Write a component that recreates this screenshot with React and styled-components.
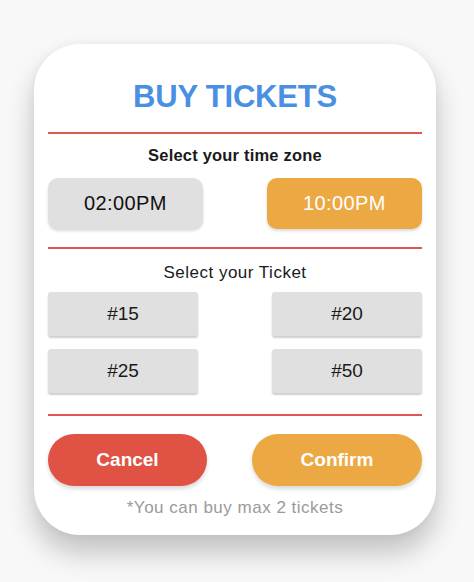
import styled, { createGlobalStyle } from 'styled-components';

const GlobalStyle = createGlobalStyle`
  html, body {
    margin: 0;
    padding: 0;
    background: #f8f8f8;
    font-family: 'Liberation Sans', Arial, sans-serif;
  }
`;

const times = [
  { label: '02:00PM', active: false },
  { label: '10:00PM', active: true },
];

const tickets = ['#15', '#20', '#25', '#50'];

function App() {
  return (
    <>
      <GlobalStyle />
      <Page>
        <Card>
          <Title>BUY TICKETS</Title>
          <Divider />
          <Label $bold>Select your time zone</Label>
          <TimeRow>
            {times.map((t) => (
              <TimeButton key={t.label} $active={t.active}>
                {t.label}
              </TimeButton>
            ))}
          </TimeRow>
          <Divider $gap={18} />
          <Label $gap={14}>Select your Ticket</Label>
          <TicketGrid>
            {tickets.map((t) => (
              <TicketButton key={t}>{t}</TicketButton>
            ))}
          </TicketGrid>
          <Divider $gap={21} />
          <Actions>
            <PillButton $color="#e05243" $width={159}>
              Cancel
            </PillButton>
            <PillButton $color="#eca943" $width={170}>
              Confirm
            </PillButton>
          </Actions>
          <Note>*You can buy max 2 tickets</Note>
        </Card>
      </Page>
    </>
  );
}

export default App;

const Page = styled.div`
  width: 474px;
  height: 582px;
  padding: 44px 0 0 34px;
  box-sizing: border-box;
  overflow: hidden;
`;

const Card = styled.div`
  width: 402px;
  height: 491px;
  box-sizing: border-box;
  padding: 0 14px;
  background: #ffffff;
  border-radius: 46px;
  box-shadow: 0 18px 28px rgba(0, 0, 0, 0.22), 0 0 10px rgba(0, 0, 0, 0.05);
  display: flex;
  flex-direction: column;
`;

const Title = styled.h1`
  margin: 33px 0 0;
  height: 40px;
  line-height: 40px;
  text-align: center;
  font-size: 31px;
  font-weight: 700;
  color: #4a90e2;
  letter-spacing: -0.2px;
`;

const Divider = styled.div`
  margin-top: ${({ $gap }) => $gap ?? 15}px;
  height: 2px;
  background: #e0574f;
`;

const Label = styled.div`
  margin-top: ${({ $gap }) => $gap ?? 11}px;
  height: 20px;
  line-height: 20px;
  text-align: center;
  font-size: ${({ $bold }) => ($bold ? 16.5 : 17)}px;
  letter-spacing: ${({ $bold }) => ($bold ? 0.2 : 0.5)}px;
  font-weight: ${({ $bold }) => ($bold ? 700 : 400)};
  color: #1a1a1a;
`;

const TimeRow = styled.div`
  margin-top: 13px;
  display: flex;
  justify-content: space-between;
`;

const TimeButton = styled.div`
  width: 155px;
  height: 51px;
  border-radius: 10px;
  display: flex;
  align-items: center;
  justify-content: center;
  font-size: 20px;
  letter-spacing: 0.4px;
  background: ${({ $active }) => ($active ? '#eca943' : '#e0e0e0')};
  color: ${({ $active }) => ($active ? '#ffffff' : '#111111')};
  box-shadow: 0 2px 3px rgba(0, 0, 0, 0.15);
`;

const TicketGrid = styled.div`
  margin-top: 9px;
  display: grid;
  grid-template-columns: 150px 150px;
  justify-content: space-between;
  row-gap: 13px;
`;

const TicketButton = styled.div`
  height: 44px;
  border-radius: 3px;
  display: flex;
  align-items: center;
  justify-content: center;
  font-size: 19px;
  color: #1a1a1a;
  background: #e0e0e0;
  box-shadow: 0 2px 2px rgba(0, 0, 0, 0.2);
`;

const Actions = styled.div`
  margin-top: 18px;
  display: flex;
  justify-content: space-between;
`;

const PillButton = styled.div`
  width: ${({ $width }) => $width}px;
  height: 52px;
  border-radius: 26px;
  display: flex;
  align-items: center;
  justify-content: center;
  font-size: 19px;
  font-weight: 700;
  color: #ffffff;
  background: ${({ $color }) => $color};
  box-shadow: 0 3px 4px rgba(0, 0, 0, 0.15);
`;

const Note = styled.div`
  margin-top: 12px;
  height: 20px;
  line-height: 20px;
  text-align: center;
  font-size: 17px;
  letter-spacing: 0.5px;
  color: #9a9a9a;
`;
